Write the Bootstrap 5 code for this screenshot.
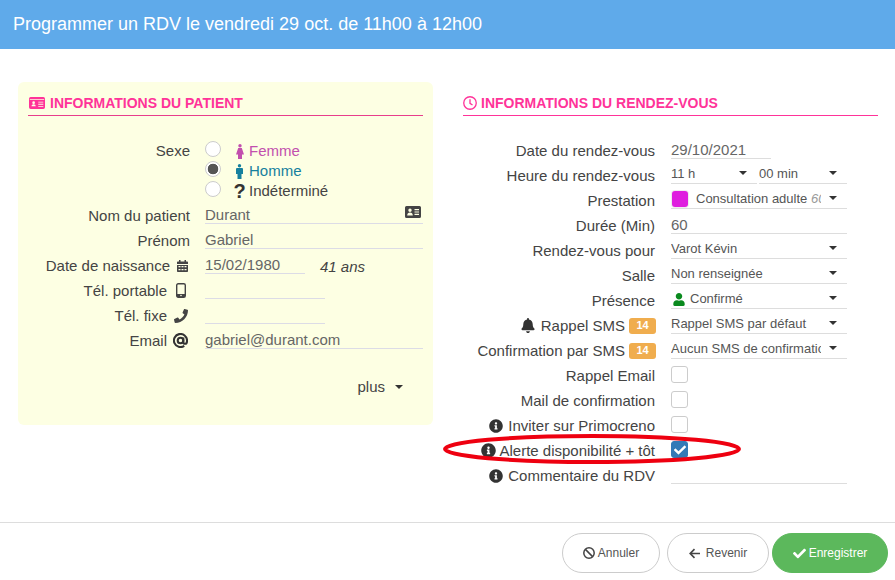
<!DOCTYPE html>
<html lang="fr">
<head>
<meta charset="utf-8">
<title>Programmer un RDV</title>
<link href="https://cdn.jsdelivr.net/npm/bootstrap@5.3.0/dist/css/bootstrap.min.css" rel="stylesheet">
<style>
html,body{height:580px;overflow:hidden}
body{font-family:"Liberation Sans",Arial,sans-serif;font-size:15px;color:#444;background:#fff}
.shell{position:relative;height:580px}
.topbar{height:49px;background:#5faaea;color:#fff;font-size:18px;line-height:49px;padding-left:13px}
.zone{height:473px;padding:33px 17px 0 18px}
.patient{width:415px;height:343px;background:#fdffe3;border-radius:6px;padding:10px 10px 0}
.rdv{width:415px;margin-left:30px;padding:10px 0 0}
.sect{height:24px;border-bottom:1px solid #ff3399;color:#ff3399;font-size:14px;font-weight:700;line-height:22px;padding-bottom:2px}
.patient .sect{border-bottom-color:#e83e8c;gap:5px;padding-left:1px}
.rdv .sect{gap:4px}
.sect svg{flex:none}
.formrows{margin-top:24px}
.rdv .formrows{margin-top:23px}
.frow{height:25px;line-height:24px}
.lab{text-align:right;flex:none;display:flex;justify-content:flex-end;align-items:center;white-space:nowrap}
.patient .lab{width:162px;gap:7px;padding-bottom:2px}
.rdv .lab{width:192px;gap:5px;padding-bottom:2px}
.rdv .lab.tight{gap:3px}
.val{flex:1;min-width:0;height:20px;margin-left:15px;position:relative}
.rdv .val{margin-left:16px;flex:none;width:176px}
.line,.line:focus{display:block;width:100%;height:20px;border:0;border-bottom:1px solid #dcdce6;border-radius:0;background:transparent;box-shadow:none;outline:0;padding:1px 0 0;font-size:15px;line-height:16px;color:#666;font-family:inherit}
.rdv .line{border-bottom-color:#ddd;padding-top:2px}
.pick,.pick:focus{display:block;width:100%;height:20px;border:0;border-bottom:1px solid #ddd;border-radius:0;padding:1px 26px 0 0;font-size:13px;line-height:18px;color:#555;font-family:inherit;box-shadow:none;outline:0;background-color:transparent;background-image:none}
.tri{position:absolute;right:10px;top:7px;width:0;height:0;border-left:4.500px solid transparent;border-right:4.500px solid transparent;border-top:4.500px solid #333;pointer-events:none}
.wshort{width:100px;flex:none}
.wmid{width:120px;flex:none}
.age{font-style:italic;margin-left:15px;line-height:20px;padding-top:3px;color:#444}
.idico{position:absolute;right:2px;top:2px}
.ro{font-size:13px;color:#555;line-height:18px;height:20px;border-bottom:1px solid #ddd;white-space:nowrap;overflow:hidden;padding:1px 26px 0 1px;display:flex;align-items:center}
.swatch{flex:none;width:16px;height:16px;border-radius:3px;background:#df1fdf;margin-right:8px;box-shadow:0 0 0 1px #eee}
.ro em{color:#999}
.clip{overflow:hidden;white-space:nowrap}
.pip{background:#f0ad4e;color:#fff;font-size:11px;font-weight:700;border-radius:3px;width:27px;height:16px;line-height:15px;text-align:center;display:inline-block;flex:none;margin:0 -1px 0 -1px}
.sexbox{height:60px;margin-bottom:4px}
.sexlab{line-height:20px;align-items:flex-start;padding-top:1px}
.sexrow{height:20px;line-height:20px;margin-left:15px;padding-top:2px}
.radioish.form-check-input{width:16px;height:16px;margin:0 11px 5px 0;flex:none;background-color:#fff;border:1px solid #ccc;box-shadow:none}
.radioish.form-check-input:checked{background-image:radial-gradient(circle at center,#555 0 5px,#fff 5.600px);background-color:#fff;border-color:#ccc}
.sexico{width:15px;display:flex;justify-content:center;margin-right:2px;flex:none}
.fem{color:#c24fae}
.hom{color:#16809e}
.qmark{font-size:20px;font-weight:700;color:#333;line-height:18px}
.box.form-check-input{width:17px;height:17px;margin:2px 0 0;border:1px solid #ccc;border-radius:3px;box-shadow:none;display:block;background-color:#fff}
.box.form-check-input:checked{background-color:#337ab7;border-color:#337ab7;background-size:12px;background-position:center;background-repeat:no-repeat;background-image:url("data:image/svg+xml,%3Csvg xmlns='http://www.w3.org/2000/svg' viewBox='0 0 512 512'%3E%3Cpath fill='%23fff' d='M173.898 439.404l-166.400-166.400c-9.997-9.997-9.997-26.206 0-36.204l36.203-36.204c9.997-9.998 26.207-9.998 36.204 0L192 312.690 432.095 72.596c9.997-9.997 26.207-9.997 36.204 0l36.203 36.204c9.997 9.997 9.997 26.206 0 36.204l-294.400 294.401c-9.998 9.997-26.207 9.997-36.204-.001z'/%3E%3C/svg%3E")}
.plusrow{margin-top:20px;padding-right:20px;gap:10px}
.icat{margin:0 2px 0 -1px}
.icphone{margin-right:2px}
.icmob{margin:0 4px 0 2px}
.iccal{margin-right:2px}
.bellgap{margin-right:1px}
.icuser{margin-left:1px;margin-right:5px;flex:none}
.foot{height:58px;border-top:1px solid #ddd;padding:10px 7px 0 0}
.act{height:40px;border-radius:20px;font-size:12px;line-height:38px;padding:0;border:1px solid #ccc;color:#555;background:#fff;gap:3px;display:inline-flex;align-items:center;justify-content:center}
.act1{width:98px}
.act2{width:102px;margin-left:7px;gap:6px}
.act3{width:116px;margin-left:3px;background:#5cb85c;border-color:#5cb85c;color:#fff}
.act3:hover{background:#5cb85c;border-color:#5cb85c;color:#fff}
.ring{position:absolute;left:443px;top:433px;pointer-events:none}
</style>
</head>
<body>
<div class="shell">
  <div class="topbar">Programmer un RDV le vendredi 29 oct. de 11h00 à 12h00</div>
  <div class="zone d-flex">
    <section class="patient">
      <div class="sect d-flex align-items-center">
        <svg width="16" height="12" viewBox="0 0 19 14"><path fill="#ff3399" fill-rule="evenodd" d="M2 0h15a2 2 0 0 1 2 2v10a2 2 0 0 1-2 2H2a2 2 0 0 1-2-2V2a2 2 0 0 1 2-2zM1 3.500h17v-1H1zM5.500 5a1.600 1.600 0 1 0 0 3.200 1.600 1.600 0 0 0 0-3.200zM3 11h5c0-1.500-1-2.400-2.500-2.400S3 9.500 3 11zM11 5.500v1h6v-1zM11 8v1h6V8zM11 10.500v1h6v-1z"/></svg>
        <span>INFORMATIONS DU PATIENT</span>
      </div>
      <div class="formrows">
        <div class="d-flex sexbox">
          <div class="lab sexlab">Sexe</div>
          <div>
            <label class="d-flex align-items-center sexrow fem"><input class="form-check-input radioish" type="radio" name="sexe"><span class="sexico"><svg width="8" height="15" viewBox="0 0 8 15"><circle cx="4" cy="1.700" r="1.700" fill="#c24fae"/><path fill="#c24fae" d="M2.200 4h3.600L8 10.500H6V15H2v-4.500H0z"/></svg></span>Femme</label>
            <label class="d-flex align-items-center sexrow hom"><input class="form-check-input radioish" type="radio" name="sexe" checked><span class="sexico"><svg width="7" height="15" viewBox="0 0 7 15"><circle cx="3.500" cy="1.700" r="1.700" fill="#16809e"/><path fill="#16809e" d="M1 4h5a1 1 0 0 1 1 1v5H5.500v5h-4v-5H0V5a1 1 0 0 1 1-1z"/></svg></span>Homme</label>
            <label class="d-flex align-items-center sexrow"><input class="form-check-input radioish" type="radio" name="sexe"><span class="sexico qmark">?</span>Indéterminé</label>
          </div>
        </div>
        <div class="d-flex frow"><div class="lab">Nom du patient</div><div class="val"><input class="line" value="Durant"><svg class="idico" width="16" height="12" viewBox="0 0 16 12"><path fill="#444" fill-rule="evenodd" d="M1.500 0h13A1.500 1.500 0 0 1 16 1.500v9a1.500 1.500 0 0 1-1.500 1.500h-13A1.500 1.500 0 0 1 0 10.500v-9A1.500 1.500 0 0 1 1.500 0zM5 2.500a1.700 1.700 0 1 0 0 3.400 1.700 1.700 0 0 0 0-3.400zM2.200 9.500h5.600C7.800 7.800 6.700 6.600 5 6.600S2.200 7.800 2.200 9.500zM9.500 3v1.200H14V3zM9.500 5.400v1.200H14V5.400zM9.500 7.800V9H14V7.800z"/></svg></div></div>
        <div class="d-flex frow"><div class="lab">Prénom</div><div class="val"><input class="line" value="Gabriel"></div></div>
        <div class="d-flex frow"><div class="lab">Date de naissance <svg class="iccal" width="11" height="12" viewBox="0 0 11 12"><path fill="#444" fill-rule="evenodd" d="M2 0h1.500v1.500h4V0H9v1.500h1.200a.8.8 0 0 1 .8.800V4H0V2.300a.8.8 0 0 1 .8-.8H2zM0 5h11v6.200a.8.8 0 0 1-.8.8H.8a.8.8 0 0 1-.8-.8zm1.500 1v1.300h2V6zm3 0v1.300h2V6zm3 0v1.300h2V6zm-6 3v1.300h2V9zm3 0v1.300h2V9zm3 0v1.300h2V9z"/></svg></div><div class="val wshort"><input class="line" value="15/02/1980"></div><div class="age">41 ans</div></div>
        <div class="d-flex frow"><div class="lab">Tél. portable <svg class="icmob" width="10" height="15" viewBox="0 0 10 15"><rect x=".7" y=".7" width="8.600" height="13.600" rx="1.500" fill="none" stroke="#444" stroke-width="1.400"/><rect x="1" y="11" width="8" height="3" fill="#444"/><circle cx="5" cy="12.500" r=".8" fill="#fdffe3"/></svg></div><div class="val wmid"><input class="line" value=""></div></div>
        <div class="d-flex frow"><div class="lab">Tél. fixe <svg class="icphone" width="14" height="14" viewBox="0 0 512 512"><path fill="#444" d="M493.400 24.600l-104-24c-11.300-2.600-22.900 3.300-27.500 13.900l-48 112c-4.200 9.800-1.400 21.300 6.900 28l60.600 49.600c-36 76.700-98.900 140.500-177.200 177.200l-49.600-60.600c-6.800-8.300-18.200-11.100-28-6.900l-112 48C3.900 366.500-2 378.100.6 389.400l24 104C27.100 504.200 36.700 512 48 512c256.100 0 464-207.500 464-464 0-11.200-7.700-20.900-18.600-23.400z"/></svg></div><div class="val wmid"><input class="line" value=""></div></div>
        <div class="d-flex frow"><div class="lab">Email <svg class="icat" width="15" height="15" viewBox="0 0 16 16" fill="none" stroke="#333" stroke-width="2.200"><circle cx="8" cy="8" r="3"/><path d="M11 4.800v4.700q0 2 2 2t2-3.500a7 7 0 1 0-3 5.800"/></svg></div><div class="val"><input class="line" value="gabriel@durant.com"></div></div>
        <div class="d-flex justify-content-end align-items-center plusrow frow"><span>plus</span><span class="tri position-static"></span></div>
      </div>
    </section>
    <section class="rdv">
      <div class="sect d-flex align-items-center">
        <svg width="14" height="14" viewBox="0 0 15 15" fill="none" stroke="#ff3399" stroke-width="1.400"><circle cx="7.500" cy="7.500" r="6.700"/><path d="M7.500 3.500v4.300l2.700 1.800"/></svg>
        <span>INFORMATIONS DU RENDEZ-VOUS</span>
      </div>
      <div class="formrows">
        <div class="d-flex frow"><div class="lab">Date du rendez-vous</div><div class="val" style="width:100px"><input class="line" value="29/10/2021"></div></div>
        <div class="d-flex frow"><div class="lab">Heure du rendez-vous</div><div class="val d-flex justify-content-between">
          <div class="position-relative" style="width:86px"><select class="form-select pick"><option>11 h</option></select><span class="tri"></span></div>
          <div class="position-relative" style="width:88px"><select class="form-select pick"><option>00 min</option></select><span class="tri"></span></div></div></div>
        <div class="d-flex frow"><div class="lab">Prestation</div><div class="val"><div class="ro"><span class="swatch"></span><span class="clip">Consultation adulte <em>60 min</em></span></div><span class="tri"></span></div></div>
        <div class="d-flex frow"><div class="lab">Durée (Min)</div><div class="val"><input class="line" value="60"></div></div>
        <div class="d-flex frow"><div class="lab">Rendez-vous pour</div><div class="val"><select class="form-select pick"><option>Varot Kévin</option></select><span class="tri"></span></div></div>
        <div class="d-flex frow"><div class="lab">Salle</div><div class="val"><select class="form-select pick"><option>Non renseignée</option></select><span class="tri"></span></div></div>
        <div class="d-flex frow"><div class="lab">Présence</div><div class="val"><div class="ro"><svg class="icuser" width="12" height="13" viewBox="0 0 448 512"><path fill="#0a8a1e" d="M224 256c70.700 0 128-57.300 128-128S294.700 0 224 0 96 57.300 96 128s57.300 128 128 128zm89.600 32h-16.700c-22.200 10.200-46.900 16-72.900 16s-50.600-5.800-72.900-16h-16.700C60.200 288 0 348.200 0 422.400V464c0 26.500 21.500 48 48 48h352c26.500 0 48-21.500 48-48v-41.600c0-74.200-60.200-134.400-134.400-134.400z"/></svg><span>Confirmé</span></div><span class="tri"></span></div></div>
        <div class="d-flex frow"><div class="lab"><svg class="bellgap" width="14" height="15" viewBox="0 0 448 512"><path fill="#333" d="M224 512c35.320 0 63.970-28.650 63.970-64H160.030c0 35.350 28.650 64 63.970 64zm215.390-149.710c-19.320-20.760-55.470-51.990-55.470-154.290 0-77.700-54.480-139.900-127.940-155.160V32c0-17.670-14.320-32-31.980-32s-31.980 14.330-31.980 32v20.840C118.560 68.100 64.080 130.300 64.080 208c0 102.300-36.150 133.530-55.470 154.290-6 6.450-8.660 14.160-8.610 21.710.11 16.400 12.980 32 32.100 32h383.800c19.120 0 32-15.600 32.100-32 .05-7.550-2.610-15.270-8.610-21.710z"/></svg> Rappel SMS <span class="pip">14</span></div><div class="val"><select class="form-select pick"><option>Rappel SMS par défaut</option></select><span class="tri"></span></div></div>
        <div class="d-flex frow"><div class="lab">Confirmation par SMS <span class="pip">14</span></div><div class="val"><select class="form-select pick"><option>Aucun SMS de confirmation</option></select><span class="tri"></span></div></div>
        <div class="d-flex frow"><div class="lab">Rappel Email</div><div class="val"><input class="form-check-input box" type="checkbox"></div></div>
        <div class="d-flex frow"><div class="lab">Mail de confirmation</div><div class="val"><input class="form-check-input box" type="checkbox"></div></div>
        <div class="d-flex frow"><div class="lab"><svg width="14" height="14" viewBox="0 0 512 512"><use href="#inf"/></svg> Inviter sur Primocreno</div><div class="val"><input class="form-check-input box" type="checkbox"></div></div>
        <div class="d-flex frow"><div class="lab tight"><svg width="15" height="15" viewBox="0 0 512 512"><use href="#inf"/></svg> Alerte disponibilité + tôt</div><div class="val"><input class="form-check-input box" type="checkbox" checked></div></div>
        <div class="d-flex frow"><div class="lab"><svg width="14" height="14" viewBox="0 0 512 512"><use href="#inf"/></svg> Commentaire du RDV</div><div class="val"><input class="line" value=""></div></div>
      </div>
    </section>
  </div>
  <div class="foot d-flex justify-content-end">
    <button class="btn act act1" type="button"><svg width="12" height="12" viewBox="0 0 12 12" fill="none" stroke="#444" stroke-width="1.500"><circle cx="6" cy="6" r="5.200"/><path d="M2.400 2.400l7.200 7.200"/></svg> Annuler</button>
    <button class="btn act act2" type="button"><svg width="11" height="11" viewBox="0 0 12 11" fill="none" stroke="#444" stroke-width="1.800"><path d="M6 .7L1.300 5.500 6 10.300M1.500 5.500H12"/></svg> Revenir</button>
    <button class="btn act act3" type="button"><svg width="13" height="13" viewBox="0 0 512 512"><path fill="#fff" d="M173.898 439.404l-166.400-166.400c-9.997-9.997-9.997-26.206 0-36.204l36.203-36.204c9.997-9.998 26.207-9.998 36.204 0L192 312.690 432.095 72.596c9.997-9.997 26.207-9.997 36.204 0l36.203 36.204c9.997 9.997 9.997 26.206 0 36.204l-294.400 294.401c-9.998 9.997-26.207 9.997-36.204-.001z"/></svg> Enregistrer</button>
  </div>
  <svg class="ring" width="300" height="32" viewBox="0 0 300 32"><ellipse cx="149" cy="16" rx="147" ry="13" fill="none" stroke="#ee0010" stroke-width="4"/></svg>
  <svg width="0" height="0" class="position-absolute"><defs><path id="inf" fill="#333" d="M256 8C119.043 8 8 119.083 8 256c0 136.997 111.043 248 248 248s248-111.003 248-248C504 119.083 392.957 8 256 8zm0 110c23.196 0 42 18.804 42 42s-18.804 42-42 42-42-18.804-42-42 18.804-42 42-42zm56 254c0 6.627-5.373 12-12 12h-88c-6.627 0-12-5.373-12-12v-24c0-6.627 5.373-12 12-12h12v-64h-12c-6.627 0-12-5.373-12-12v-24c0-6.627 5.373-12 12-12h64c6.627 0 12 5.373 12 12v100h12c6.627 0 12 5.373 12 12v24z"/></defs></svg>
</div>
<script src="https://cdn.jsdelivr.net/npm/bootstrap@5.3.0/dist/js/bootstrap.bundle.min.js"></script>
</body>
</html>
